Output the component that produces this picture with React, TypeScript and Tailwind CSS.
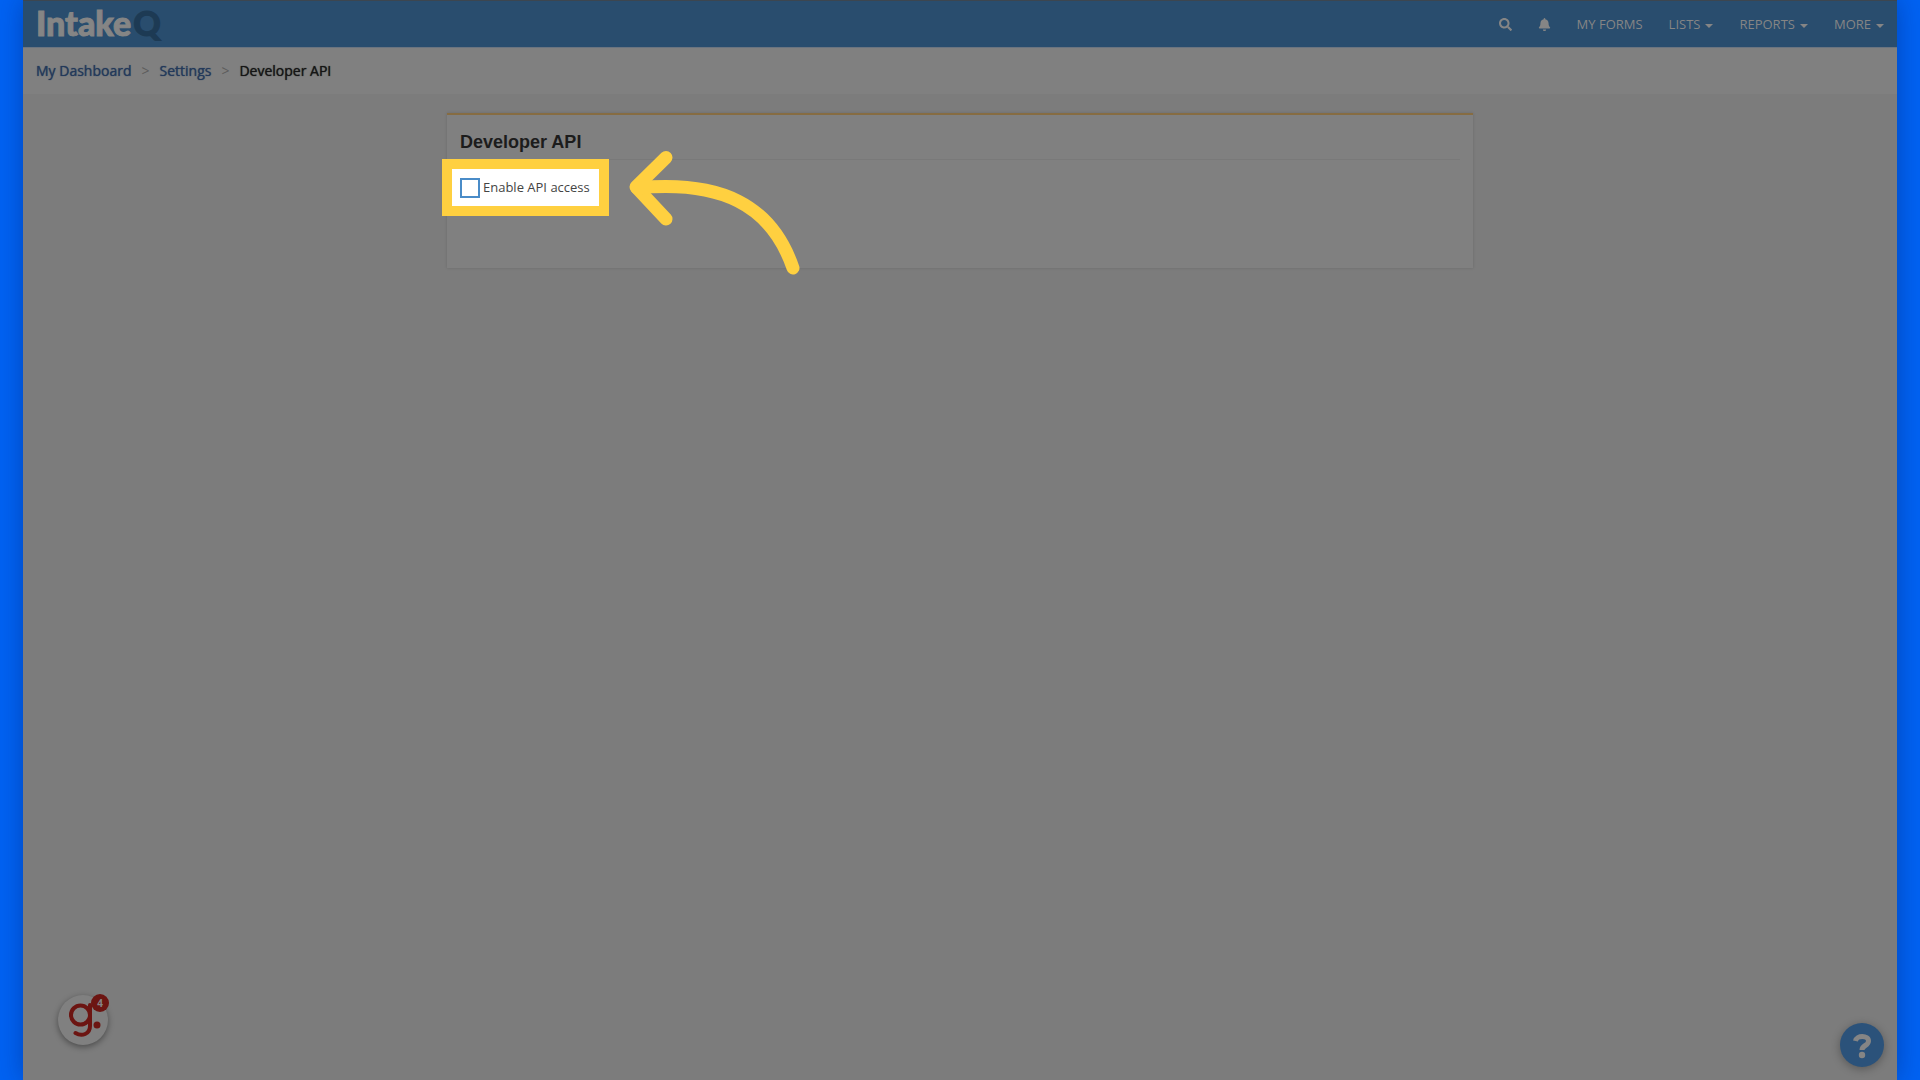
import type { ReactNode } from 'react';
import { FaSearch, FaBell } from 'react-icons/fa';

function NavLink({ children, caret = false }: { children: ReactNode; caret?: boolean }) {
  return (
    <a href="#" className="flex items-center gap-[5px]">
      {children}
      {caret && (
        <span className="mt-0.5 h-0 w-0 border-x-4 border-t-4 border-x-transparent border-t-[#858585]" />
      )}
    </a>
  );
}

function Arrow() {
  return (
    <svg
      className="pointer-events-none absolute top-[-29px] left-[168px] h-[140px] w-[184px]"
      viewBox="0 0 184 140"
      fill="none"
      stroke="#ffd040"
      strokeWidth="13"
      strokeLinecap="round"
      aria-hidden="true"
    >
      <path d="M46 17.500 16 47 46 79" strokeLinejoin="round" />
      <path d="M17 48C100 40 151 64 173 128" />
    </svg>
  );
}

export default function App() {
  return (
    <div className="min-h-screen bg-[#0062f2] px-[23px] font-['Open_Sans',sans-serif]">
      <div className="relative flex min-h-screen flex-col bg-[#7c7c7c] shadow-[0_0_24px_rgba(0,20,80,0.35)]">
        <header className="flex h-[47px] items-center justify-between border-t border-[#3c4650] bg-[#294d6e] pr-[13px] pl-[13px]">
          <a
            href="#"
            className="flex items-center gap-0.5 pb-0.5 font-['Lato',sans-serif] text-[34px] leading-none font-black text-[#858585] [-webkit-text-stroke:1px]"
          >
            Intake<span className="text-[#1d3a54]">Q</span>
          </a>
          <nav className="flex items-center gap-[26px] pt-px text-[13px] text-[#858585]">
            <button type="button" aria-label="Search">
              <FaSearch size={13} />
            </button>
            <button type="button" aria-label="Notifications">
              <FaBell size={13} />
            </button>
            <NavLink>MY FORMS</NavLink>
            <NavLink caret>LISTS</NavLink>
            <NavLink caret>REPORTS</NavLink>
            <NavLink caret>MORE</NavLink>
          </nav>
        </header>

        <nav
          aria-label="Breadcrumb"
          className="flex h-[47px] items-center gap-2.5 border-t border-[#6a7480] bg-[#808080] px-[13px] pb-0.5 text-[14px] text-[#23395a]"
        >
          <a href="#" className="[text-shadow:0_0_1px_currentColor]">My Dashboard</a>
          <span className="text-[#5c5c5c]">&gt;</span>
          <a href="#" className="[text-shadow:0_0_1px_currentColor]">Settings</a>
          <span className="text-[#5c5c5c]">&gt;</span>
          <span className="text-[#151515] [text-shadow:0_0_1px_currentColor]">Developer API</span>
        </nav>

        <main className="mx-auto mt-[19px] w-full max-w-[1026px]">
          <section className="h-[155px] border-t-2 border-[#866c42] bg-[#808080] px-[13px] shadow-[0_0_3px_rgba(0,0,0,0.15)]">
            <h1 className="h-[45px] border-b border-[#797979] pt-[13px] font-['Liberation_Sans',sans-serif] text-[18px] leading-7 font-bold text-[#1c1c1c]">
              Developer API
            </h1>
            <div className="relative -mt-px -ml-[18px] w-[167px] border-[10px] border-[#ffd040] bg-white">
              <label className="flex h-[37px] items-center gap-[3px] pl-2 text-[13px] whitespace-nowrap text-[#444]">
                <input
                  type="checkbox"
                  className="h-5 w-5 shrink-0 appearance-none border-2 border-[#4a8cc8] bg-white checked:bg-[#4a8cc8]"
                />
                Enable API access
              </label>
              <Arrow />
            </div>
          </section>
        </main>

        <button
          type="button"
          aria-label="Guides, 4 new"
          className="absolute bottom-[35px] left-[35px] h-[50px] w-[50px] rounded-full bg-[#808080] shadow-[0_2px_6px_rgba(0,0,0,0.4)]"
        >
          <svg viewBox="0 0 50 50" className="h-full w-full" fill="none" stroke="#6c1512" strokeWidth="4" aria-hidden="true">
            <circle cx="22.500" cy="20" r="9.500" />
            <path d="M32 10v21c0 8-8 11-14.500 7" strokeLinecap="round" />
            <circle cx="39" cy="30" r="3.500" fill="#6c1512" stroke="none" />
          </svg>
          <span className="absolute -top-px -right-px flex h-[18px] w-[18px] items-center justify-center rounded-full bg-[#6c1512] text-[10px] font-bold text-[#858585]">
            4
          </span>
        </button>

        <button
          type="button"
          aria-label="Help"
          className="absolute right-[13px] bottom-[13px] h-11 w-11 rounded-full bg-[#2b527a] shadow-[0_2px_10px_rgba(0,0,0,0.3)]"
        >
          <svg viewBox="0 0 44 44" className="h-full w-full" fill="none" stroke="#858585" strokeWidth="5" aria-hidden="true">
            <path d="M15.500 18c1-6 13-6 13 0 0 5-6.500 4-6.500 9" />
            <circle cx="22" cy="32" r="3.200" fill="#858585" stroke="none" />
          </svg>
        </button>
      </div>
    </div>
  );
}
